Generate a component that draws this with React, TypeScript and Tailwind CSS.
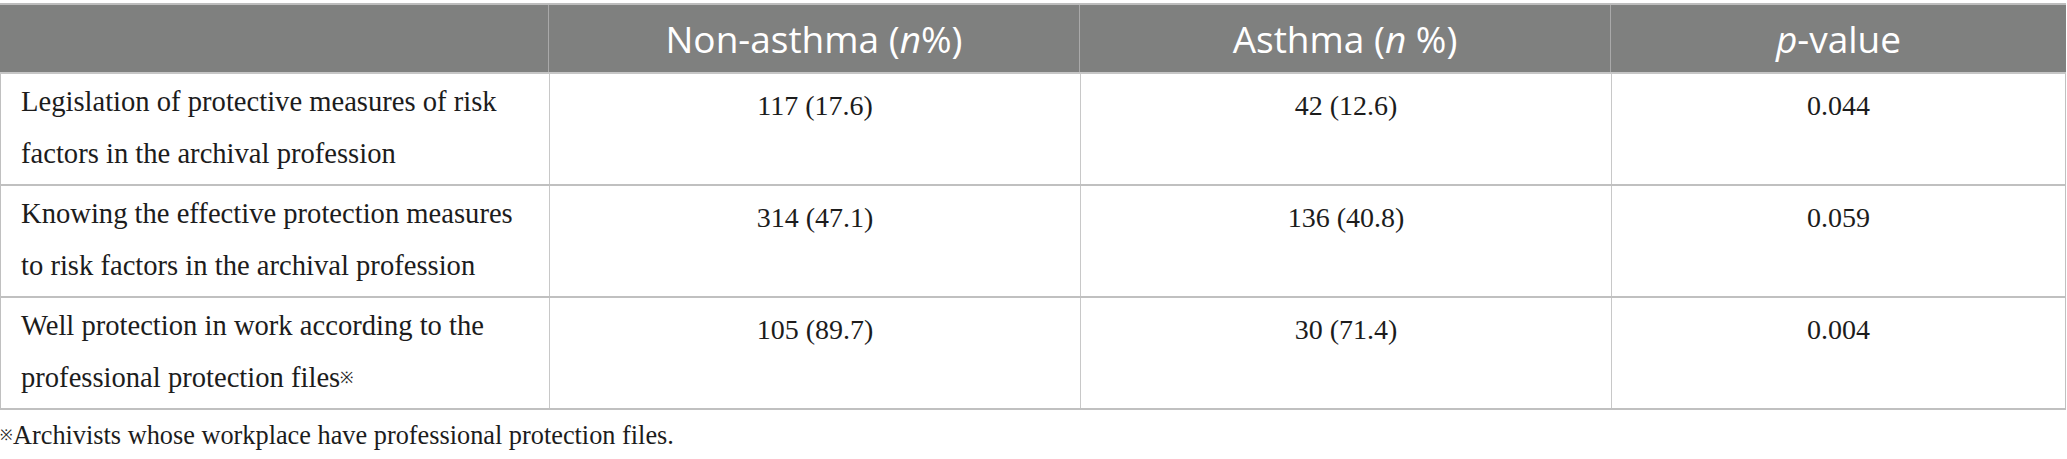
const rows = [
    {
        label: ["Legislation of protective measures of risk", "factors in the archival profession"],
        nonAsthma: "117 (17.6)",
        asthma: "42 (12.6)",
        p: "0.044",
        mark: false,
    },
    {
        label: ["Knowing the effective protection measures", "to risk factors in the archival profession"],
        nonAsthma: "314 (47.1)",
        asthma: "136 (40.8)",
        p: "0.059",
        mark: false,
    },
    {
        label: ["Well protection in work according to the", "professional protection files"],
        nonAsthma: "105 (89.7)",
        asthma: "30 (71.4)",
        p: "0.004",
        mark: true,
    },
];

const serif = "font-['Liberation_Serif','Times_New_Roman',serif]";
const sans = "font-['Open_Sans','Noto_Sans',sans-serif]";

export default function App() {
    return (
        <div className="w-[2067px] h-[459px] bg-white pt-[3px] overflow-hidden">
            <div className="w-[2066px] border-t-2 border-[#bdbdbd]">
                {/* Header */}
                <div className={`grid grid-cols-[549px_531px_531px_1fr] h-[69px] bg-[#7f807f] border-b-2 border-[#c6c6c6] text-white font-normal text-[37px] ${sans}`}>
                    <div className="border-r border-[#a9a9a9]" />
                    <div className="flex items-center justify-center border-r border-[#a9a9a9]">
                        Non-asthma (<i>n</i>%)
                    </div>
                    <div className="flex items-center justify-center border-r border-[#a9a9a9]">
                        Asthma (<i>n</i>&nbsp;%)
                    </div>
                    <div className="flex items-center justify-center">
                        <i>p</i>-value
                    </div>
                </div>

                {/* Body */}
                {rows.map((row, i) => (
                    <div
                        key={i}
                        className={`grid grid-cols-[549px_531px_531px_1fr] h-[112px] border-b-2 border-l border-r border-[#c0c0c0] text-[#1c1c1c] text-[28px] ${serif}`}
                    >
                        <div className="border-r border-[#c8c8c8] pl-[20px] pt-[2px] leading-[52px] text-[28.6px]">
                            <div>{row.label[0]}</div>
                            <div>
                                {row.label[1]}
                                {row.mark && <sup className="text-[16px] relative top-[-4px]">※</sup>}
                            </div>
                        </div>
                        <div className="border-r border-[#c8c8c8] text-center pt-[6px] leading-[52px]">{row.nonAsthma}</div>
                        <div className="border-r border-[#c8c8c8] text-center pt-[6px] leading-[52px]">{row.asthma}</div>
                        <div className="text-center pt-[6px] leading-[52px]">{row.p}</div>
                    </div>
                ))}
            </div>

            {/* Footnote */}
            <p className={`mt-[8px] text-[26.3px] leading-[36px] text-[#1c1c1c] ${serif}`}>
                <sup className="text-[15px] relative top-[-4px]">※</sup>Archivists whose workplace have professional protection files.
            </p>
        </div>
    );
}
